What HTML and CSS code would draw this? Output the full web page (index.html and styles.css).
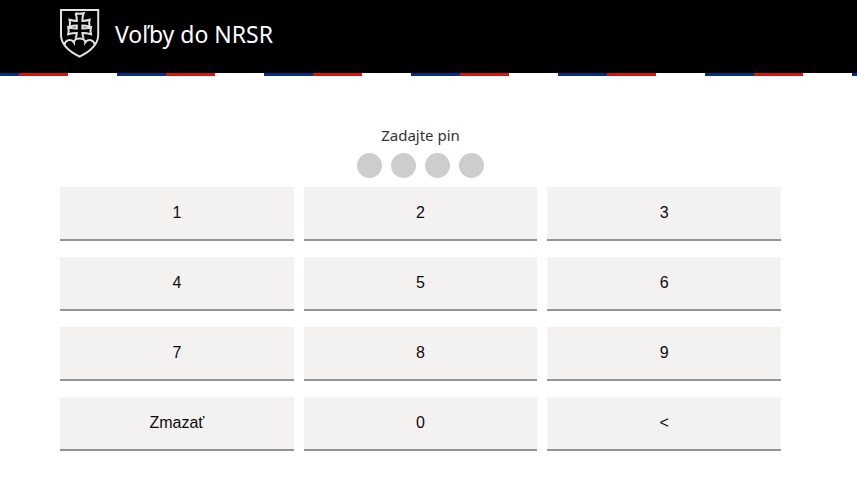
FILE: index.html
```html
<!DOCTYPE html>
<html lang="sk">
<head>
<meta charset="utf-8">
<meta name="viewport" content="width=device-width, initial-scale=1">
<title>Voľby do NRSR</title>
<link rel="stylesheet" href="styles.css">
</head>
<body>
<header class="header">
  <svg class="crest" viewBox="0 0 40 50" aria-hidden="true">
    <path class="crest-line" d="M1 1H38.200V26C38.200 36 29 43 19.600 47.600C10.200 43 1 36 1 26Z"/>
    <path class="crest-line" d="M4.500 35.500C5.500 30.500 11.500 29.500 14 33.500C14 28 25.200 28 25.200 33.500C27.700 29.500 33.700 30.500 34.700 35.500"/>
    <path class="crest-cross" d="M15.500 4.200Q19.600 5.200 23.700 4.200Q22.400 7.500 22.400 12Q26 12 29.600 10.800Q28.800 14 29.600 17.700Q26 16.500 22.400 16.500V19.500Q27 19.500 31 18.200Q30.100 22 31 25.300Q27 24 22.400 24Q22.500 27 23.800 29.500M15.400 29.500Q16.700 27 16.800 24Q12.200 24 8.200 25.300Q9.100 22 8.200 18.200Q12.200 19.500 16.800 19.500V16.500Q13.200 16.500 9.600 17.700Q10.400 14 9.600 10.800Q13.200 12 16.800 12Q16.800 7.500 15.500 4.200"/>
  </svg>
  <h1 class="title">Voľby do NRSR</h1>
</header>
<div class="ribbon"></div>
<main class="main">
  <h2 class="prompt">Zadajte pin</h2>
  <div class="dots">
    <span class="dot"></span>
    <span class="dot"></span>
    <span class="dot"></span>
    <span class="dot"></span>
  </div>
  <div class="keypad">
    <button class="key" type="button">1</button>
    <button class="key" type="button">2</button>
    <button class="key" type="button">3</button>
    <button class="key" type="button">4</button>
    <button class="key" type="button">5</button>
    <button class="key" type="button">6</button>
    <button class="key" type="button">7</button>
    <button class="key" type="button">8</button>
    <button class="key" type="button">9</button>
    <button class="key" type="button">Zmazať</button>
    <button class="key" type="button">0</button>
    <button class="key" type="button">&lt;</button>
  </div>
</main>
</body>
</html>
```
FILE: styles.css
```css
* {
  box-sizing: border-box;
}

body {
  margin: 0;
  background: #fff;
  color: #333;
  font-family: "Noto Sans", sans-serif;
}

.header {
  display: flex;
  align-items: center;
  gap: 15px;
  padding: 9px 76px 14px 60px;
  background: #000;
  color: #fff;
}

.crest {
  width: 40px;
  height: 50px;
}

.crest-line,
.crest-cross {
  fill: none;
  stroke: #e2e2e2;
  stroke-width: 2;
}

.title {
  margin: 0;
  font-size: 23px;
  font-weight: 400;
  line-height: 32px;
}

.ribbon {
  height: 3px;
  background: repeating-linear-gradient(90deg, #002f87 0 49px, #dc1408 49px 98px, #fff 98px 147px);
  background-position: -30px 0;
  background-size: 147px 100%;
}

.main {
  padding: 47px 76px 44px 60px;
}

.prompt {
  margin: 0 0 6px;
  font-size: 15px;
  font-weight: 400;
  line-height: 24px;
  text-align: center;
}

.dots {
  display: flex;
  justify-content: center;
  gap: 9px;
  margin-bottom: 9px;
}

.dot {
  width: 25px;
  height: 25px;
  border-radius: 50%;
  background: #cdcdcd;
}

.keypad {
  display: grid;
  grid-template-columns: repeat(3, 1fr);
  gap: 16px 10px;
}

.key {
  height: 54px;
  padding: 0;
  border: 0;
  border-bottom: 2px solid #949494;
  background: #f3f2f1;
  color: #0b0c0c;
  font-family: "Liberation Sans", Arial, sans-serif;
  font-size: 16px;
}
```
